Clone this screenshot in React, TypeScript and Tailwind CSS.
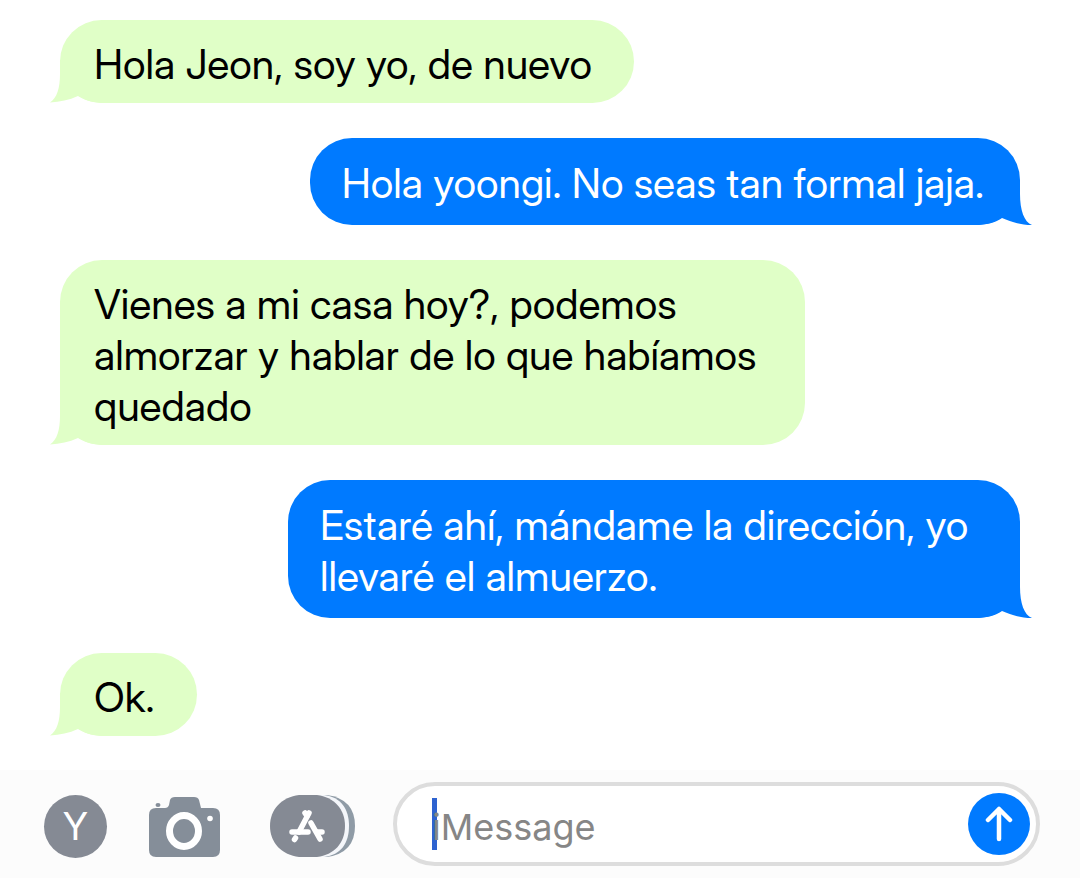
import React, { useState } from 'react';

type Message = {
  from: 'them' | 'me';
  text: string;
};

const messages: Message[] = [
  { from: 'them', text: 'Hola Jeon, soy yo, de nuevo' },
  { from: 'me', text: 'Hola yoongi. No seas tan formal jaja.' },
  { from: 'them', text: 'Vienes a mi casa hoy?, podemos almorzar y hablar de lo que habíamos quedado' },
  { from: 'me', text: 'Estaré ahí, mándame la dirección, yo llevaré el almuerzo.' },
  { from: 'them', text: 'Ok.' },
];

const Bubble: React.FC<{ message: Message }> = ({ message }) => {
  if (message.from === 'me') {
    return (
      <li className="relative self-end max-w-[732px] rounded-[42px] bg-[#007aff] pl-8 pr-9 pt-5 pb-4 text-white">
        <svg className="absolute bottom-0 -right-3 w-[57px] h-[45px]" viewBox="0 0 57 45" fill="#007aff" aria-hidden="true">
          <path d="M0 0H45V14C45 30 49 42 57 45C46 45 36 42 27 38C20 43 10 45 0 45Z" />
        </svg>
        <span className="relative">{message.text}</span>
      </li>
    );
  }

  return (
    <li className="relative self-start max-w-[745px] rounded-[42px] bg-[#e0ffc7] pl-[34px] pr-[42px] pt-[19px] pb-[13px] text-black">
      <svg className="absolute bottom-0 -left-[10px] w-[55px] h-[43px]" viewBox="0 0 55 43" fill="#e0ffc7" aria-hidden="true">
        <path d="M55 0H10V14C10 28 7 38 0 42.500C10 42 19 40 28 36C36 41 45 43 55 43Z" />
      </svg>
      <span className="relative">{message.text}</span>
    </li>
  );
};

const CameraIcon = () => (
  <svg className="w-[72px] h-[62px]" viewBox="0 0 72 62" aria-hidden="true">
    <g fill="#858e99">
      <path d="M22 5Q23 2 27 2H46Q50 2 51 5L53 13H65Q72 13 72 20V55Q72 62 65 62H8Q1 62 1 55V20Q1 13 8 13H17Q20 13 21 10Z" />
      <ellipse cx="10" cy="10" rx="2.500" ry="2" />
    </g>
    <ellipse cx="36" cy="36" rx="14.500" ry="15.500" fill="none" stroke="#fff" strokeWidth="7" />
    <circle cx="62" cy="23.500" r="2.800" fill="#fff" />
  </svg>
);

const AppsIcon = () => (
  <svg className="w-[85px] h-[62px]" viewBox="0 0 85 62" aria-hidden="true">
    <path d="M52 0H57Q85 4 85 31T57 62H52Z" fill="#8f9ba6" />
    <path d="M48 0H54C71 2 79 14 79 31S71 60 54 62H48Z" fill="#f4f6fa" />
    <path d="M29 0H47C64 2 75 14 75 31S64 60 47 62H29C12 60 0 48 0 31S12 2 29 0Z" fill="#858a94" />
    <g stroke="#fff" strokeWidth="5.500" strokeLinecap="round" fill="none">
      <path d="M39 18L29 37" />
      <path d="M35 18L37 21M41 28L50 44" />
      <path d="M22 37H38M47 37H52" />
      <path d="M25.500 43L24.500 44.500" />
    </g>
  </svg>
);

const Composer = () => {
  const [draft, setDraft] = useState('');

  return (
    <form className="flex items-center bg-[#fcfcfc] pl-11 pr-10 py-3" onSubmit={(e) => e.preventDefault()}>
      <div className="flex shrink-0 items-center pt-1">
        <button
          type="button"
          aria-label="Profile"
          className="flex size-[63px] items-center justify-center rounded-full bg-[#858a94] text-[38px] text-white"
        >
          Y
        </button>
        <button type="button" aria-label="Camera" className="ml-[41px]">
          <CameraIcon />
        </button>
        <button type="button" aria-label="Apps" className="ml-[50px]">
          <AppsIcon />
        </button>
      </div>

      <div className="relative ml-[38px] flex h-[84px] min-w-0 flex-1 items-center rounded-full border-4 border-[#dddddd] bg-white pr-[6px]">
        {!draft && <span className="absolute left-[35px] h-[52px] w-[5px] bg-[#2e63d0]" />}
        <input
          type="text"
          aria-label="Message"
          placeholder="iMessage"
          value={draft}
          onChange={(e) => setDraft(e.target.value)}
          className="relative min-w-0 flex-1 bg-transparent pt-1.5 pl-[35px] text-[36px] text-black outline-none placeholder:text-[#868686]"
        />
        <button
          type="submit"
          aria-label="Send"
          className="flex size-[62px] shrink-0 items-center justify-center rounded-full bg-[#007aff]"
        >
          <svg className="w-7 h-9" viewBox="0 0 28 36" fill="none" stroke="#fff" strokeWidth="4.500" strokeLinecap="round" strokeLinejoin="round" aria-hidden="true">
            <path d="M14 33V3M3 14L14 3L25 14" />
          </svg>
        </button>
      </div>
    </form>
  );
};

export default function App() {
  return (
    <main className="flex min-h-screen flex-col bg-white font-['Inter',sans-serif]">
      <ul className="flex flex-1 flex-col gap-[35px] px-[60px] pt-5 pb-[34px] font-['Inter_Display','Inter',sans-serif] text-[41px] leading-[51px]">
        {messages.map((message, idx) => (
          <Bubble key={idx} message={message} />
        ))}
      </ul>
      <Composer />
    </main>
  );
}
